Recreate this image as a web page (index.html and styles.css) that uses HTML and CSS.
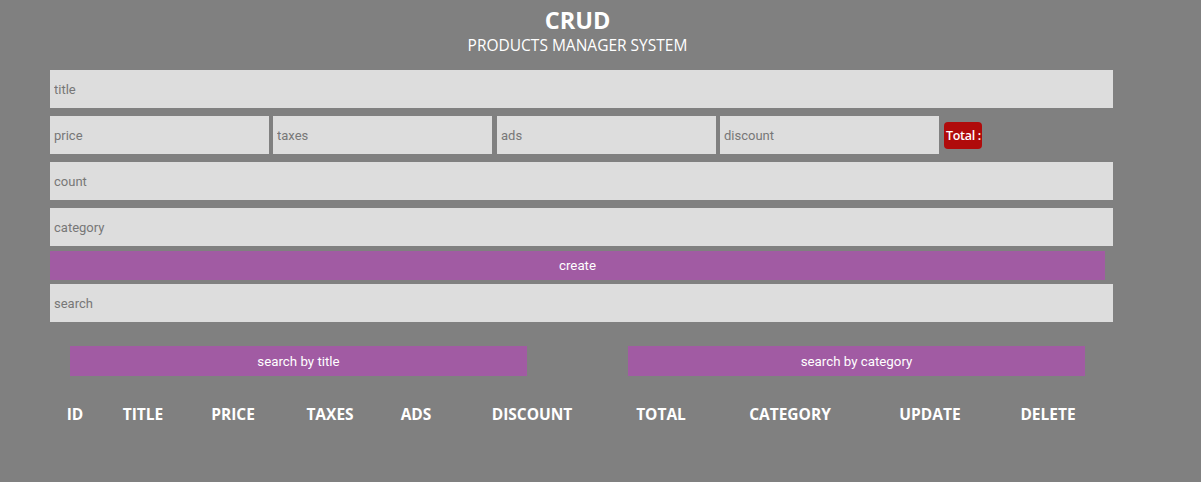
FILE: index.html
```html
<!DOCTYPE html>
<html>
<head>
<meta charset="utf-8">
<link rel="stylesheet" href="styles.css">
</head>
<body>
<div class="crud">
  <div class="head">
    <h2>CRUD</h2>
    <p>PRODUCTS MANAGER SYSTEM</p>
  </div>
  <div class="inputs">
    <input type="text" class="field" placeholder="title">
    <div class="price">
      <input type="number" class="small" placeholder="price">
      <input type="number" class="small" placeholder="taxes">
      <input type="number" class="small" placeholder="ads">
      <input type="number" class="small" placeholder="discount">
      <small class="total">Total :</small>
    </div>
    <input type="number" class="field" placeholder="count">
    <input type="text" class="field" placeholder="category">
    <button class="create">create</button>
  </div>
  <div class="outputs">
    <input type="text" class="field search" placeholder="search">
    <div class="btn-search">
      <button class="sbtn">search by title</button>
      <button class="sbtn">search by category</button>
    </div>
  </div>
  <div class="thead">
    <div class="c1">ID</div>
    <div class="c2">TITLE</div>
    <div class="c3">PRICE</div>
    <div class="c4">TAXES</div>
    <div class="c5">ADS</div>
    <div class="c6">DISCOUNT</div>
    <div class="c7">TOTAL</div>
    <div class="c8">CATEGORY</div>
    <div class="c9">UPDATE</div>
    <div class="c10">DELETE</div>
  </div>
</div>
</body>
</html>
```
FILE: styles.css
```css
* { box-sizing: border-box; }
html, body { margin: 0; padding: 0; }
body {
  background: #808080;
  color: #fff;
  font-family: "Open Sans", "Noto Sans", sans-serif;
  width: 1201px;
  height: 482px;
  overflow: hidden;
}
.crud {
  width: 1055px;
  margin-left: 50px;
}
.head {
  text-align: center;
  padding-top: 5px;
  height: 70px;
}
.head h2 {
  margin: 0;
  font-size: 23.5px;
  font-weight: 700;
  line-height: 30px;
}
.head p {
  margin: 0;
  font-size: 15.5px;
  line-height: 20px;
}
input {
  font-family: "Roboto", "Liberation Sans", sans-serif;
  font-size: 13px;
  color: #333;
  background: #dddddd;
  border: none;
  outline: none;
  padding: 0 4px;
  height: 38px;
  display: block;
}
input::placeholder { color: #777; }
input[type=number]::-webkit-inner-spin-button,
input[type=number]::-webkit-outer-spin-button { -webkit-appearance: none; margin: 0; }
.field {
  width: 1063px;
  margin-bottom: 8px;
}
.price {
  display: flex;
  align-items: center;
  margin-bottom: 8px;
  height: 38px;
}
.small {
  width: 219px;
  margin-right: 4px;
}
.small:nth-child(2) { margin-right: 5px; }
.small:nth-child(4) { margin-right: 5px; }
.total {
  background: #b00b0b;
  color: #fff;
  font-family: "Open Sans", sans-serif;
  font-weight: 600;
  font-size: 12.5px;
  height: 27px;
  line-height: 27px;
  padding: 0 2px;
  border-radius: 4px;
  width: 38px;
  text-align: center;
  white-space: nowrap;
  letter-spacing: -0.3px;
}
button {
  font-family: "Roboto", "Liberation Sans", sans-serif;
  font-size: 13.3px;
  color: #fff;
  background: #a15ba3;
  border: none;
  cursor: pointer;
}
.create {
  display: block;
  width: 1055px;
  height: 29px;
  margin-top: -3px;
  margin-bottom: 4px;
}
.search { margin-bottom: 0; }
.btn-search {
  display: flex;
  justify-content: space-between;
  padding: 24px 20px 0;
}
.sbtn {
  width: 457px;
  height: 30px;
}
.thead {
  display: grid;
  grid-template-columns: 50px 86px 94px 100px 72px 160px 98px 160px 120px 116px;
  margin-top: 26px;
  font-weight: 700;
  font-size: 15.5px;
  line-height: 24px;
  text-align: center;
}
```
